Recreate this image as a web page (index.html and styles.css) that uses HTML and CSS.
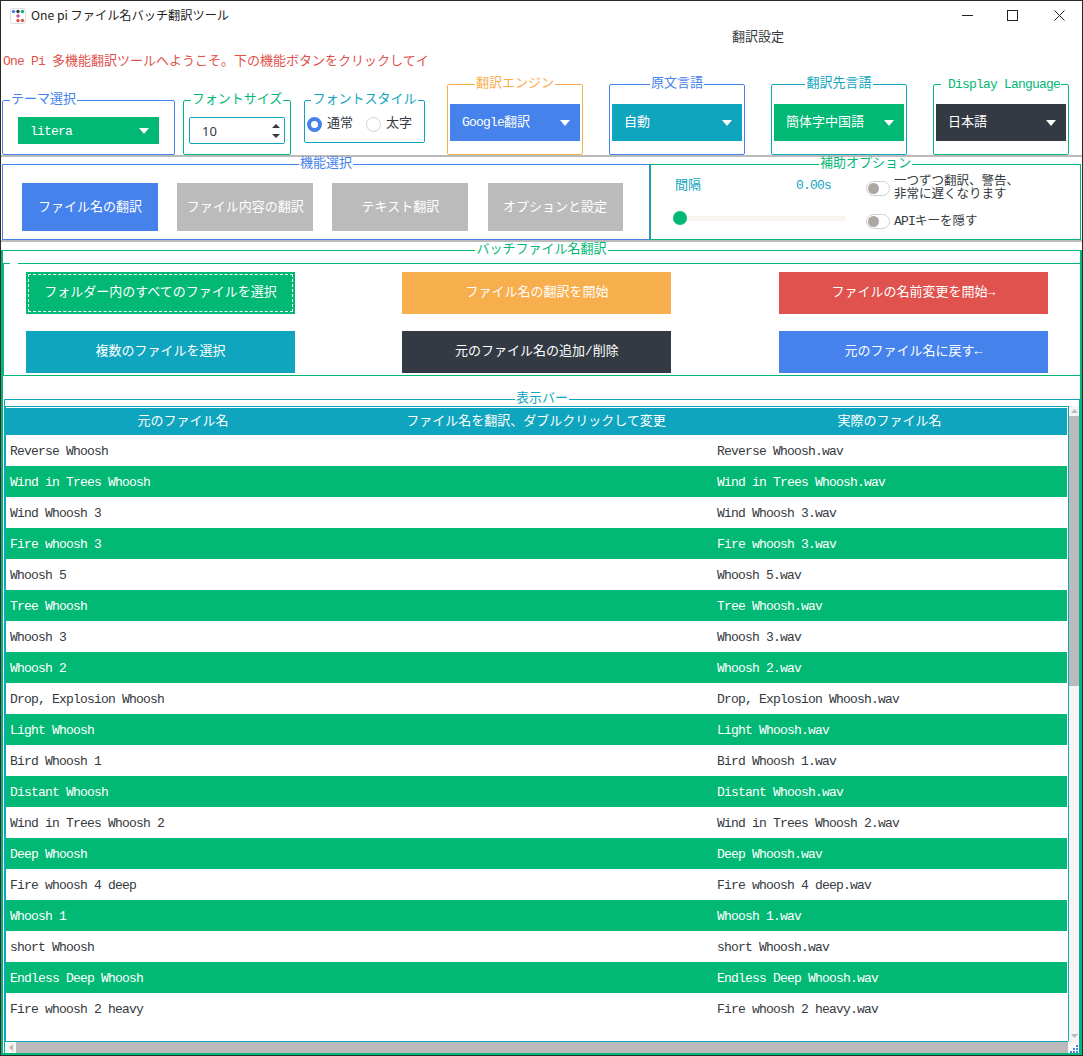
FILE: index.html
```html
<!DOCTYPE html>
<html lang="ja">
<head>
<meta charset="utf-8">
<title>One pi ファイル名バッチ翻訳ツール</title>
<link rel="stylesheet" href="styles.css">
</head>
<body>
<div class="window">
  <header class="titlebar">
    <svg class="app-icon" width="16" height="16" viewBox="0 0 16 16">
      <rect x="0.5" y="0.5" width="15" height="15" rx="2" fill="#fff" stroke="#ddd"/>
      <circle cx="3.5" cy="3.5" r="1.7" fill="#4582ec"/>
      <circle cx="8" cy="3.5" r="1.7" fill="#343a40"/>
      <circle cx="12.5" cy="3.5" r="1.7" fill="#02b875"/>
      <circle cx="8" cy="8" r="1.7" fill="#c653a8"/>
      <circle cx="8" cy="12.5" r="1.7" fill="#e0524d"/>
      <circle cx="12.5" cy="12.5" r="1.7" fill="#e0524d"/>
    </svg>
    <span class="app-title">One pi ファイル名バッチ翻訳ツール</span>
    <div class="win-controls">
      <svg width="11" height="11" viewBox="0 0 11 11"><path d="M0 5.5H11" stroke="#222" fill="none"/></svg>
      <svg width="11" height="11" viewBox="0 0 11 11"><rect x="0.5" y="0.5" width="10" height="10" stroke="#222" fill="none"/></svg>
      <svg class="win-close" width="11" height="11" viewBox="0 0 11 11"><path d="M0.5 0.5L10.5 10.5M10.5 0.5L0.5 10.5" stroke="#222" fill="none"/></svg>
    </div>
  </header>

  <div class="settings-title">翻訳設定</div>
  <div class="welcome"><span class="lat">One Pi </span>多機能翻訳ツールへようこそ。下の機能ボタンをクリックしてイ</div>

  <div class="settings-row">
    <fieldset class="group low theme-box c-blue">
      <legend class="legend-left">テーマ選択</legend>
      <div class="combo combo-small bg-green"><span class="lat">litera</span><svg class="caret" width="10" height="6" viewBox="0 0 10 6"><path d="M0 0H10L5 6Z" fill="#fff"/></svg></div>
    </fieldset>
    <fieldset class="group low size-box c-green">
      <legend>フォントサイズ</legend>
      <div class="spin">
        <span class="spin-value">10</span>
        <svg width="8" height="14" viewBox="0 0 8 14"><path d="M4 0L8 4H0ZM0 10H8L4 14Z" fill="#343a40"/></svg>
      </div>
    </fieldset>
    <fieldset class="group low style-box c-teal">
      <legend>フォントスタイル</legend>
      <div class="radios">
        <span class="radio radio-on"></span><span class="radio-label">通常</span>
        <span class="radio"></span><span class="radio-label">太字</span>
      </div>
    </fieldset>
    <fieldset class="group tall c-orange">
      <legend>翻訳エンジン</legend>
      <div class="combo combo-big bg-blue"><span><span class="lat">Google</span>翻訳</span><svg class="caret" width="10" height="6" viewBox="0 0 10 6"><path d="M0 0H10L5 6Z" fill="#fff"/></svg></div>
    </fieldset>
    <fieldset class="group tall c-blue">
      <legend>原文言語</legend>
      <div class="combo combo-big bg-teal"><span>自動</span><svg class="caret" width="10" height="6" viewBox="0 0 10 6"><path d="M0 0H10L5 6Z" fill="#fff"/></svg></div>
    </fieldset>
    <fieldset class="group tall c-teal">
      <legend>翻訳先言語</legend>
      <div class="combo combo-big bg-green"><span>簡体字中国語</span><svg class="caret" width="10" height="6" viewBox="0 0 10 6"><path d="M0 0H10L5 6Z" fill="#fff"/></svg></div>
    </fieldset>
    <fieldset class="group tall c-green">
      <legend class="legend-display"><span class="lat">Display Language</span></legend>
      <div class="combo combo-big bg-dark"><span>日本語</span><svg class="caret" width="10" height="6" viewBox="0 0 10 6"><path d="M0 0H10L5 6Z" fill="#fff"/></svg></div>
    </fieldset>
  </div>
  <div class="rule"></div>

  <div class="middle-row">
    <fieldset class="group func-box c-blue">
      <legend>機能選択</legend>
      <div class="func-buttons">
        <button class="btn func-btn bg-blue">ファイル名の翻訳</button>
        <button class="btn func-btn bg-gray">ファイル内容の翻訳</button>
        <button class="btn func-btn bg-gray">テキスト翻訳</button>
        <button class="btn func-btn bg-gray">オプションと設定</button>
      </div>
    </fieldset>
    <fieldset class="group aux-box c-green">
      <legend>補助オプション</legend>
      <div class="aux-content">
        <div class="aux-left">
          <div class="aux-values"><span class="aux-label">間隔</span><span class="lat">0.00s</span></div>
          <input class="slider" type="range" min="0" max="100" value="0" aria-label="間隔">
        </div>
        <div class="aux-right">
          <div class="toggle-row toggle-row-first">
            <span class="toggle"><span class="knob"></span></span>
            <span class="toggle-text">一つずつ翻訳、警告、<br>非常に遅くなります</span>
          </div>
          <div class="toggle-row toggle-row-second">
            <span class="toggle"><span class="knob"></span></span>
            <span class="toggle-text"><span class="lat">API</span>キーを隠す</span>
          </div>
        </div>
      </div>
    </fieldset>
  </div>
  <div class="rule"></div>

  <fieldset class="group batch-box c-green">
    <legend>バッチファイル名翻訳</legend>
    <fieldset class="group actions-box c-green">
      <legend class="legend-blank"></legend>
      <div class="actions">
        <button class="btn act-btn bg-green focused">フォルダー内のすべてのファイルを選択</button>
        <button class="btn act-btn bg-orange">ファイル名の翻訳を開始</button>
        <button class="btn act-btn bg-red">ファイルの名前変更を開始→</button>
        <button class="btn act-btn bg-teal">複数のファイルを選択</button>
        <button class="btn act-btn bg-dark">元のファイル名の追加/削除</button>
        <button class="btn act-btn bg-blue">元のファイル名に戻す←</button>
      </div>
    </fieldset>

    <fieldset class="group display-box c-teal">
      <legend>表示バー</legend>
      <div class="display-inner">
        <div class="display-main">
          <div class="table-frame">
            <table class="files">
              <colgroup><col class="col-a"><col class="col-b"><col class="col-c"></colgroup>
              <thead>
                <tr><th>元のファイル名</th><th>ファイル名を翻訳、ダブルクリックして変更</th><th>実際のファイル名</th></tr>
              </thead>
              <tbody>
                <tr><td>Reverse Whoosh</td><td></td><td>Reverse Whoosh.wav</td></tr>
                <tr><td>Wind in Trees Whoosh</td><td></td><td>Wind in Trees Whoosh.wav</td></tr>
                <tr><td>Wind Whoosh 3</td><td></td><td>Wind Whoosh 3.wav</td></tr>
                <tr><td>Fire whoosh 3</td><td></td><td>Fire whoosh 3.wav</td></tr>
                <tr><td>Whoosh 5</td><td></td><td>Whoosh 5.wav</td></tr>
                <tr><td>Tree Whoosh</td><td></td><td>Tree Whoosh.wav</td></tr>
                <tr><td>Whoosh 3</td><td></td><td>Whoosh 3.wav</td></tr>
                <tr><td>Whoosh 2</td><td></td><td>Whoosh 2.wav</td></tr>
                <tr><td>Drop, Explosion Whoosh</td><td></td><td>Drop, Explosion Whoosh.wav</td></tr>
                <tr><td>Light Whoosh</td><td></td><td>Light Whoosh.wav</td></tr>
                <tr><td>Bird Whoosh 1</td><td></td><td>Bird Whoosh 1.wav</td></tr>
                <tr><td>Distant Whoosh</td><td></td><td>Distant Whoosh.wav</td></tr>
                <tr><td>Wind in Trees Whoosh 2</td><td></td><td>Wind in Trees Whoosh 2.wav</td></tr>
                <tr><td>Deep Whoosh</td><td></td><td>Deep Whoosh.wav</td></tr>
                <tr><td>Fire whoosh 4 deep</td><td></td><td>Fire whoosh 4 deep.wav</td></tr>
                <tr><td>Whoosh 1</td><td></td><td>Whoosh 1.wav</td></tr>
                <tr><td>short Whoosh</td><td></td><td>short Whoosh.wav</td></tr>
                <tr><td>Endless Deep Whoosh</td><td></td><td>Endless Deep Whoosh.wav</td></tr>
                <tr><td>Fire whoosh 2 heavy</td><td></td><td>Fire whoosh 2 heavy.wav</td></tr>
              </tbody>
            </table>
          </div>
          <div class="vbar">
            <div class="vbar-btn"><svg width="7" height="4" viewBox="0 0 7 4"><path d="M3.5 0L7 4H0Z" fill="#bbb"/></svg></div>
            <div class="vbar-thumb"></div>
            <div class="vbar-track"></div>
            <div class="vbar-btn"><svg width="7" height="4" viewBox="0 0 7 4"><path d="M0 0H7L3.5 4Z" fill="#bbb"/></svg></div>
          </div>
        </div>
        <div class="hbar">
          <div class="hbar-btn"><svg width="4" height="7" viewBox="0 0 4 7"><path d="M4 0V7L0 3.5Z" fill="#bbb"/></svg></div>
          <div class="hbar-thumb"></div>
          <div class="corner">
            <svg class="grip" width="10" height="9" viewBox="0 0 10 9">
              <rect width="10" height="9" fill="#fff"/>
              <path d="M7 1h2v2H7zM4 4h2v2H4zM7 4h2v2H7zM1 7h2v2H1zM4 7h2v2H4zM7 7h2v2H7z" fill="#4582ec"/>
            </svg>
          </div>
        </div>
      </div>
    </fieldset>
  </fieldset>
</div>
</body>
</html>
```

FILE: styles.css
```css
* { box-sizing: border-box; }

html, body { margin: 0; padding: 0; }

body {
  width: 1083px;
  height: 1056px;
  overflow: hidden;
  background: #fff;
  color: #343a40;
  font-family: "Liberation Mono", "Noto Sans CJK JP", monospace;
  font-size: 13px;
  line-height: 16px;
}

.lat { font-size: 13px; letter-spacing: -0.8px; }

.window {
  width: 1083px;
  height: 1056px;
  border: 1px solid #2a2a2a;
  display: flex;
  flex-direction: column;
  overflow: hidden;
}

/* title bar */
.titlebar {
  flex: none;
  height: 28px;
  display: flex;
  align-items: center;
  padding-left: 9px;
}
.app-icon { flex: none; margin-top: 1px; }
.app-title {
  margin-left: 5px;
  font-family: "Noto Sans CJK JP", "Noto Sans", sans-serif;
  font-size: 12.2px;
  color: #222;
}
.win-controls {
  margin-left: auto;
  margin-top: 1px;
  padding-right: 17px;
  display: flex;
  gap: 34px;
}
.win-controls svg { display: block; }
.win-controls .win-close { margin-left: 2px; }

.settings-title {
  flex: none;
  height: 16px;
  padding-top: 1px;
  padding-left: 731px;
}
.welcome {
  flex: none;
  width: 428px;
  height: 16px;
  margin-top: 8px;
  padding-top: 1px;
  padding-left: 2px;
  color: #e0524d;
  white-space: nowrap;
  overflow: hidden;
}

/* group boxes */
.group {
  margin: 0;
  padding: 0;
  min-width: 0;
  border: 1px solid currentColor;
  border-radius: 2px;
}
legend {
  margin: 0 auto;
  padding: 0 1px;
  line-height: 14px;
  height: 14px;
  white-space: nowrap;
}
.legend-left { margin: 0 0 0 7px; }
.legend-display { padding: 1px 1px 0 7px; }
.legend-blank {
  margin: 0 0 0 6px;
  width: 8px;
  height: 1px;
  padding: 0;
}

.c-blue { color: #4582ec; }
.c-green { color: #02b875; }
.c-teal { color: #10a5be; }
.c-orange { color: #f7ae4d; }

.bg-blue { background: #4582ec; }
.bg-green { background: #02b875; }
.bg-teal { background: #10a5be; }
.bg-orange { background: #f7ae4d; }
.bg-red { background: #df524e; }
.bg-dark { background: #333a43; }
.bg-gray { background: #bbb; }

/* settings row */
.settings-row {
  flex: none;
  height: 78px;
  margin-top: 8px;
  padding-left: 1px;
  display: flex;
  align-items: flex-start;
}
.low { margin-top: 16px; }
.theme-box { width: 173px; height: 62px; }
.size-box { width: 108px; height: 62px; margin-left: 8px; }
.style-box { width: 121px; height: 50px; margin-left: 13px; }
.tall { width: 136px; height: 78px; margin-left: 26px; }
.style-box + .tall { margin-left: 22px; }

.combo {
  display: flex;
  align-items: center;
  justify-content: space-between;
  padding: 0 10px 0 12px;
  color: #fff;
}
.combo-small { width: 141px; height: 27px; margin: 10px 0 0 15px; }
.combo-small .lat { padding-top: 3px; }
.combo-big { width: 130px; height: 37px; margin: 13px 0 0 2px; }
.caret { flex: none; }

.spin {
  width: 96px;
  height: 27px;
  margin: 10px 0 0 5px;
  padding: 0 4px 0 12px;
  display: flex;
  align-items: center;
  justify-content: space-between;
  border: 1px solid #10a5be;
  border-radius: 2px;
  color: #343a40;
}
.spin-value {
  font-family: "Noto Sans", sans-serif;
  font-size: 13px;
  color: #343a40;
}

.radios {
  display: flex;
  align-items: center;
  margin: 9px 0 0 2px;
  color: #343a40;
}
.radio {
  flex: none;
  width: 15px;
  height: 15px;
  border: 1px solid #cfd2d6;
  border-radius: 50%;
  background: #fff;
}
.radio-on { border: 4px solid #4582ec; }
.radio-label {
  flex: none;
  margin: 0 13px 0 5px;
  white-space: nowrap;
}

.rule {
  flex: none;
  height: 2px;
  background: #bbb;
}

/* function + aux */
.middle-row {
  flex: none;
  height: 83px;
  padding-left: 1px;
  display: flex;
}
.func-box { width: 648px; height: 83px; border-radius: 0; }
.aux-box { width: 431px; height: 83px; border-radius: 0; }

.btn {
  display: block;
  margin: 0;
  padding: 0;
  border: 0;
  color: #fff;
  font: inherit;
  white-space: nowrap;
  overflow: hidden;
}
.func-buttons {
  display: flex;
  gap: 19.2px;
  padding: 12px 0 0 19px;
}
.func-btn { flex: none; width: 136px; height: 48px; padding-top: 1px; }
.func-btn:last-child { width: 135px; }

.aux-content {
  display: flex;
  color: #343a40;
}
.aux-left {
  width: 173px;
  margin-left: 22px;
}
.aux-values {
  display: grid;
  grid-template-columns: 123px auto;
  align-items: center;
  height: 16px;
  margin-top: 7px;
  color: #10a5be;
}
.aux-label { padding-left: 2px; }
.slider {
  display: block;
  width: 173px;
  height: 14px;
  margin: 17px 0 0;
  padding: 0;
  background: transparent;
  -webkit-appearance: none;
  appearance: none;
}
.slider::-webkit-slider-runnable-track {
  height: 5px;
  background: #f8f5f0;
}
.slider::-webkit-slider-thumb {
  -webkit-appearance: none;
  appearance: none;
  width: 14px;
  height: 14px;
  margin-top: -4.5px;
  border-radius: 50%;
  background: #02b875;
}
.aux-right { margin-left: 20px; }
.toggle-row {
  display: flex;
  align-items: center;
  gap: 4px;
}
.toggle-row-first { margin-top: 5px; height: 25px; }
.toggle-row-second { margin-top: 13px; height: 15px; }
.toggle {
  flex: none;
  width: 24px;
  height: 15px;
  padding: 1px;
  border: 1px solid #d0d0d0;
  border-radius: 8px;
  background: #fff;
}
.knob {
  display: block;
  width: 11px;
  height: 11px;
  border-radius: 50%;
  background: #aba7a1;
}
.toggle-text {
  font-size: 12.5px;
  line-height: 13px;
  white-space: nowrap;
}

/* batch area */
.batch-box {
  flex: 1;
  min-height: 0;
  margin-top: 1px;
  border-width: 1px 2px 2px;
  border-radius: 0;
  display: flex;
  flex-direction: column;
}
.actions-box {
  flex: none;
  margin-top: 6px;
  border-radius: 0;
  border-right: 0;
}
.actions {
  display: grid;
  grid-template-columns: repeat(3, 269px);
  grid-auto-rows: 42px;
  column-gap: 107.4px;
  row-gap: 17px;
  padding: 8px 0 2px 22px;
}
.act-btn { width: 269px; height: 42px; }
.focused { outline: 1px dashed #fff; outline-offset: -3px; }

.display-box {
  flex: 1;
  min-height: 0;
  margin: 16px 0 0 1px;
  border-bottom: 0;
  border-radius: 0;
  display: flex;
  flex-direction: column;
}
.display-inner {
  flex: 1;
  min-height: 0;
  display: flex;
  flex-direction: column;
}
.display-main {
  flex: 1;
  min-height: 0;
  display: flex;
}
.table-frame {
  width: 1064px;
  padding: 1px 1px 0 0;
  border: 1px solid #10a5be;
  border-bottom: 0;
  overflow: hidden;
}
.files {
  width: 1061px;
  border-collapse: collapse;
  table-layout: fixed;
  color: #343a40;
  font-size: 13px;
  letter-spacing: -0.8px;
}
.col-a { width: 354px; }
.col-b { width: 352px; }
.col-c { width: 355px; }
.files th {
  height: 27px;
  padding: 0;
  background: #10a5be;
  color: #fff;
  font-size: 13px;
  font-weight: normal;
  letter-spacing: 0;
  text-align: center;
}
.files td {
  height: 31px;
  padding: 3px 0 0 4px;
  white-space: nowrap;
}
.files td:last-child { padding-left: 5px; }
.files tbody tr:nth-child(even) {
  background: #02b875;
  color: #fff;
}

.vbar {
  flex: 1;
  display: flex;
  flex-direction: column;
  background: #f8f5f0;
}
.vbar-btn {
  flex: none;
  height: 10px;
  display: flex;
  align-items: center;
  justify-content: center;
}
.vbar-thumb { flex: none; height: 270px; background: #bbb; }
.vbar-track { flex: 1; }

.hbar {
  flex: none;
  height: 12px;
  display: flex;
  border-top: 1px solid #10a5be;
  background: #bbb;
}
.hbar-btn {
  flex: none;
  width: 11px;
  display: flex;
  align-items: center;
  justify-content: center;
  background: #f8f5f0;
}
.hbar-thumb { flex: 1; }
.corner {
  flex: none;
  width: 11px;
  margin-top: -1px;
  display: flex;
  align-items: flex-end;
  justify-content: flex-end;
  background: #f8f5f0;
}
.grip { display: block; }
```
